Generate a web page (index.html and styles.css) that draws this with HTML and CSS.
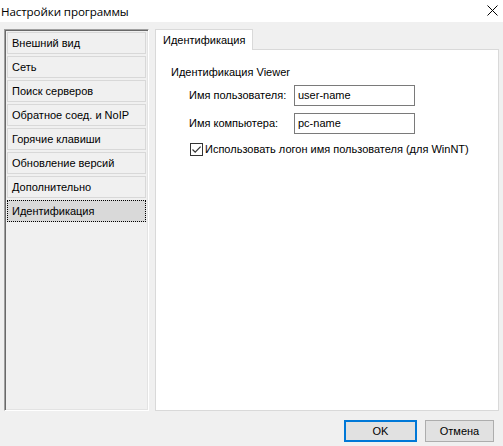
FILE: index.html
```html
<!DOCTYPE html>
<html lang="ru">
<head>
<meta charset="utf-8">
<title>Настройки программы</title>
<link rel="stylesheet" href="styles.css">
</head>
<body>
<div class="window">
  <div class="titlebar">
    <span class="title">Настройки программы</span>
    <svg class="close" width="11" height="11" viewBox="0 0 11 11"><path d="M0.5 0.5 L10.5 10.5 M10.5 0.5 L0.5 10.5" stroke="#000" stroke-width="1" fill="none"/></svg>
  </div>
  <div class="main">
    <div class="list">
      <div class="item">Внешний вид</div>
      <div class="item">Сеть</div>
      <div class="item">Поиск серверов</div>
      <div class="item">Обратное соед. и NoIP</div>
      <div class="item">Горячие клавиши</div>
      <div class="item">Обновление версий</div>
      <div class="item">Дополнительно</div>
      <div class="item selected">Идентификация</div>
    </div>
    <div class="tabs">
      <div class="tabstrip">
        <div class="tab">Идентификация</div>
      </div>
      <div class="panel">
        <div class="group-title">Идентификация Viewer</div>
        <div class="form">
          <label class="lbl">Имя пользователя:</label>
          <div class="input">user-name</div>
          <label class="lbl">Имя компьютера:</label>
          <div class="input">pc-name</div>
        </div>
        <div class="check-row">
          <span class="checkbox"><svg width="11" height="11" viewBox="0 0 11 11"><path d="M1.5 5.5 L4.2 8.2 L9.6 2.6" stroke="#333" stroke-width="1.2" fill="none"/></svg></span>
          <span class="check-label">Использовать логон имя пользователя (для WinNT)</span>
        </div>
      </div>
    </div>
  </div>
  <div class="buttons">
    <div class="btn default">OK</div>
    <div class="btn cancel">Отмена</div>
  </div>
</div>
</body>
</html>
```
FILE: styles.css
```css
html, body {
  margin: 0;
  padding: 0;
  background: #f0f0f0;
}
.window {
  width: 503px;
  height: 446px;
  background: #f0f0f0;
  font-family: "Liberation Sans", Arial, sans-serif;
  font-size: 11px;
  color: #000;
  overflow: hidden;
}
.titlebar {
  height: 22px;
  background: #fff;
  display: flex;
  align-items: center;
  justify-content: space-between;
  padding: 0 5px 0 1px;
  box-sizing: border-box;
}
.title {
  font-family: "Open Sans", "Liberation Sans", sans-serif;
  font-size: 11.6px;
  letter-spacing: -0.1px;
}
.close {
  display: block;
  margin-top: -2px;
}
.main {
  display: flex;
  gap: 6px;
  padding: 7px 4px 0 4px;
  height: 382px;
}
.list {
  width: 145px;
  height: 382px;
  box-sizing: border-box;
  border-top: 1px solid #a0a0a0;
  border-left: 1px solid #a0a0a0;
  border-right: 1px solid #fff;
  border-bottom: 1px solid #fff;
  box-shadow: inset 1px 1px 0 #696969, inset -1px -1px 0 #e3e3e3;
  padding: 2px 2px 0 2px;
  display: flex;
  flex-direction: column;
  gap: 2px;
}
.item {
  height: 22px;
  box-sizing: border-box;
  border: 1px solid #d8d8d8;
  padding-left: 4px;
  display: flex;
  align-items: center;
  white-space: nowrap;
}
.item.selected {
  background: #d9d9d9;
  border: 1px dotted #000;
}
.tabs {
  width: 344px;
  display: flex;
  flex-direction: column;
}
.tabstrip {
  display: flex;
  height: 20px;
  position: relative;
  z-index: 1;
}
.tab {
  width: 98px;
  height: 21px;
  box-sizing: border-box;
  background: #fff;
  border: 1px solid #d9d9d9;
  border-bottom: none;
  padding: 4px 0 0 7px;
}
.panel {
  flex: 1;
  background: #fff;
  border: 1px solid #d9d9d9;
  padding: 15px 0 0 15px;
}
.group-title {
  height: 14px;
  line-height: 14px;
}
.form {
  display: grid;
  grid-template-columns: 105px 121px;
  row-gap: 7px;
  margin: 6px 0 0 18px;
  align-items: center;
}
.lbl {
  line-height: 21px;
}
.input {
  height: 21px;
  box-sizing: border-box;
  border: 1px solid #7a7a7a;
  padding: 0 0 0 3px;
  line-height: 19px;
}
.check-row {
  display: flex;
  align-items: center;
  margin: 8px 0 0 19px;
  height: 14px;
}
.checkbox {
  width: 13px;
  height: 13px;
  box-sizing: border-box;
  border: 1px solid #333;
  display: flex;
  align-items: center;
  justify-content: center;
  margin-right: 2px;
}
.checkbox svg {
  display: block;
}
.buttons {
  display: flex;
  justify-content: flex-end;
  gap: 8px;
  padding: 9px 9px 0 0;
}
.btn {
  width: 73px;
  height: 22px;
  box-sizing: border-box;
  background: #e1e1e1;
  border: 1px solid #adadad;
  display: flex;
  align-items: center;
  justify-content: center;
}
.btn.cancel {
  width: 69px;
}
.btn.default {
  border: 2px solid #0078d7;
}
```
